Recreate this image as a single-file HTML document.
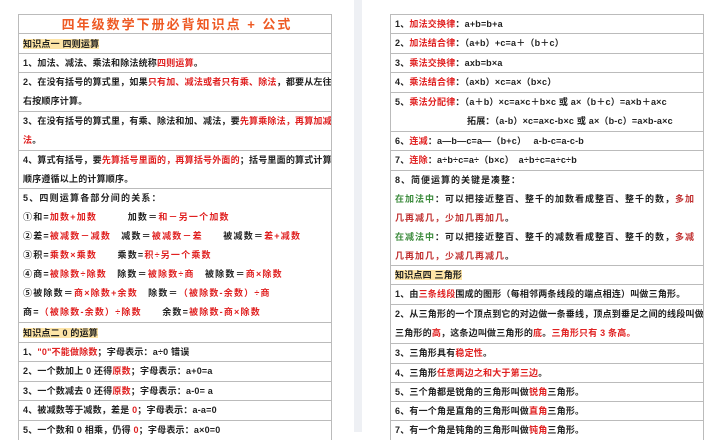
<!DOCTYPE html><html><head><meta charset="utf-8"><style>
*{margin:0;padding:0;box-sizing:border-box}
body{width:718px;height:432px;overflow:hidden;background:#fff;font-family:"Liberation Sans","Noto Sans CJK SC",sans-serif;font-size:9px;font-weight:bold;color:#222;position:relative}
.gap{position:absolute;left:354px;top:0;width:8px;height:432px;background:#eef0f4}
.t{position:absolute;top:14px;border-left:1px solid #bbb;border-right:1px solid #bbb}
.r{border-top:1px solid #bbb;padding-left:4px;line-height:19px;overflow:hidden;white-space:nowrap;letter-spacing:0.2px}
.red{color:#e02020}.grn{color:#3a8a3a}.dred{color:#c03030}
.h span{background:#fde4a6}
.title{text-align:center;color:#ee5a24;font-size:13px;letter-spacing:2px;line-height:19px}
</style></head><body>
<div class="gap"></div>
<div class="t" style="left:18px;width:314px">
<div class="r title" style="height:19px">四年级数学下册必背知识点 + 公式</div>
<div class="r h" style="height:20px;line-height:20px"><span>知识点一 四则运算</span></div>
<div class="r" style="height:19px">1、加法、减法、乘法和除法统称<span class="red">四则运算</span>。</div>
<div class="r" style="height:39px">2、在没有括号的算式里，如果<span class="red">只有加、减法或者只有乘、除法</span>，都要从左往<br>右按顺序计算。</div>
<div class="r" style="height:39px">3、在没有括号的算式里，有乘、除法和加、减法，要<span class="red">先算乘除法，再算加减</span><br><span class="red">法</span>。</div>
<div class="r" style="height:38px">4、算式有括号，要<span class="red">先算括号里面的，再算括号外面的</span>；括号里面的算式计算<br>顺序遵循以上的计算顺序。</div>
<div class="r" style="height:134px;letter-spacing:1.2px">5、四则运算各部分间的关系：<br>①和=<span class="red">加数+加数</span>　　　加数＝<span class="red">和－另一个加数</span><br>②差=<span class="red">被减数－减数</span>　减数＝<span class="red">被减数－差</span>　　被减数＝<span class="red">差+减数</span><br>③积=<span class="red">乘数×乘数</span>　　乘数=<span class="red">积÷另一个乘数</span><br>④商=<span class="red">被除数÷除数</span>　除数＝<span class="red">被除数÷商</span>　被除数＝<span class="red">商×除数</span><br>⑤被除数＝<span class="red">商×除数+余数</span>　除数＝<span class="red">（被除数-余数）÷商</span><br>商=<span class="red">（被除数-余数）÷除数</span>　　余数=<span class="red">被除数-商×除数</span></div>
<div class="r h" style="height:20px;line-height:20px"><span>知识点二 0 的运算</span></div>
<div class="r" style="height:19px">1、<span class="red">"0"不能做除数</span>；字母表示：a÷0 错误</div>
<div class="r" style="height:20px">2、一个数加上 0 还得<span class="red">原数</span>；字母表示：a+0=a</div>
<div class="r" style="height:19px">3、一个数减去 0 还得<span class="red">原数</span>；字母表示：a-0= a</div>
<div class="r" style="height:20px">4、被减数等于减数，差是 <span class="red">0</span>；字母表示：a-a=0</div>
<div class="r" style="height:20px">5、一个数和 0 相乘，仍得 <span class="red">0</span>；字母表示：a×0=0</div>
</div>
<div class="t" style="left:390px;width:314px">
<div class="r" style="height:19px">1、<span class="red">加法交换律</span>：a+b=b+a</div>
<div class="r" style="height:20px">2、<span class="red">加法结合律</span>：（a+b）+c=a＋（b＋c）</div>
<div class="r" style="height:19px">3、<span class="red">乘法交换律</span>：axb=b×a</div>
<div class="r" style="height:20px">4、<span class="red">乘法结合律</span>：（a×b）×c=a×（b×c）</div>
<div class="r" style="height:39px">5、<span class="red">乘法分配律</span>：（a＋b）×c=a×c＋b×c 或 a×（b＋c）=a×b＋a×c<br><span style="padding-left:72px">拓展：（a-b）×c=a×c-b×c 或 a×（b-c）=a×b-a×c</span></div>
<div class="r" style="height:19px">6、<span class="red">连减</span>：a—b—c=a—（b+c）　 a-b-c=a-c-b</div>
<div class="r" style="height:20px">7、<span class="red">连除</span>：a÷b÷c=a÷（b×c）　a÷b÷c=a÷c÷b</div>
<div class="r" style="height:95px;letter-spacing:1px">8、简便运算的关键是凑整：<br><span class="grn">在加法中</span>：可以把接近整百、整千的加数看成整百、整千的数，<span class="dred">多加</span><br><span class="dred">几再减几，少加几再加几</span>。<br><span class="grn">在减法中</span>：可以把接近整百、整千的减数看成整百、整千的数，<span class="dred">多减</span><br><span class="dred">几再加几，少减几再减几</span>。</div>
<div class="r h" style="height:19px"><span>知识点四 三角形</span></div>
<div class="r" style="height:20px">1、由<span class="red">三条线段</span>围成的图形（每相邻两条线段的端点相连）叫做三角形。</div>
<div class="r" style="height:39px">2、从三角形的一个顶点到它的对边做一条垂线，顶点到垂足之间的线段叫做<br>三角形的<span class="red">高</span>，这条边叫做三角形的<span class="red">底</span>。<span class="red">三角形只有 3 条高。</span></div>
<div class="r" style="height:20px">3、三角形具有<span class="red">稳定性</span>。</div>
<div class="r" style="height:19px">4、三角形<span class="red">任意两边之和大于第三边</span>。</div>
<div class="r" style="height:19px">5、三个角都是锐角的三角形叫做<span class="red">锐角</span>三角形。</div>
<div class="r" style="height:19px">6、有一个角是直角的三角形叫做<span class="red">直角</span>三角形。</div>
<div class="r" style="height:20px">7、有一个角是钝角的三角形叫做<span class="red">钝角</span>三角形。</div>
</div>
</body></html>
